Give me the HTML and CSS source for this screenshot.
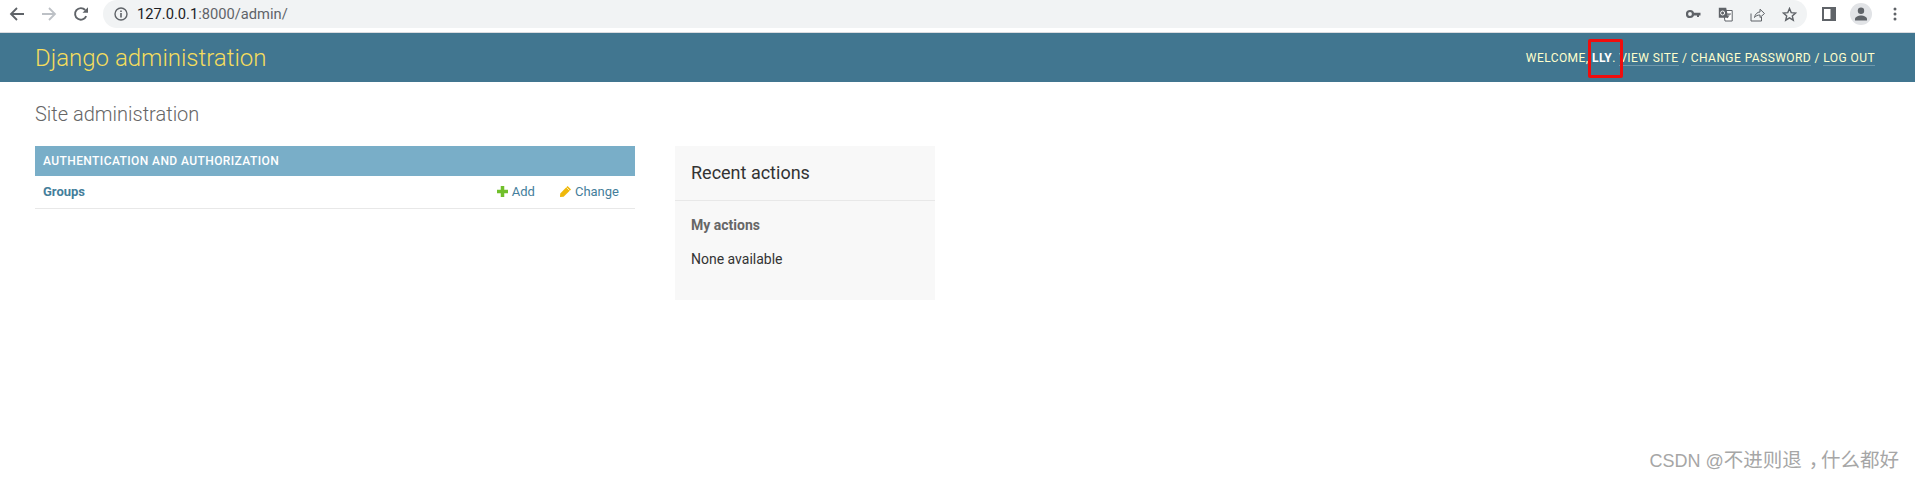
FILE: index.html
```html
<!DOCTYPE html>
<html lang="en">
<head>
    <meta charset="UTF-8">
    <title>Site administration | Django site admin</title>
    <link rel="stylesheet" href="styles.css">
</head>
<body>
    <div class="browser-bar">
        <div class="nav-icons">
            <svg width="16" height="16" viewBox="0 0 16 16"><path d="M15 8H2M8 2L2 8l6 6" fill="none" stroke="#5f6368" stroke-width="1.8"/></svg>
            <svg width="16" height="16" viewBox="0 0 16 16"><path d="M1 8h13M8 2l6 6-6 6" fill="none" stroke="#bdc1c6" stroke-width="1.8"/></svg>
            <svg width="16" height="16" viewBox="0 0 16 16"><path d="M13.2 10.2A5.8 5.8 0 1 1 12.2 4" fill="none" stroke="#5f6368" stroke-width="1.9"/><path d="M9.5 6.8H15V1.3z" fill="#5f6368"/></svg>
        </div>
        <div class="omnibox">
            <svg class="info-icon" width="14" height="14" viewBox="0 0 14 14"><circle cx="7" cy="7" r="6" fill="none" stroke="#5f6368" stroke-width="1.4"/><path d="M6.2 6h1.6v4.4H6.2zM6.2 3.4h1.6V5H6.2z" fill="#5f6368"/></svg>
            <span class="url"><span class="host">127.0.0.1</span>:8000/admin/</span>
            <div class="omni-icons">
                <svg width="15" height="10" viewBox="0 0 15 10"><circle cx="4" cy="5" r="3" fill="none" stroke="#5f6368" stroke-width="2.2"/><path d="M7 3.8h7.5v2.6h-1.5V8h-2V6.4H7z" fill="#5f6368"/></svg>
                <svg width="15" height="15" viewBox="0 0 15 15"><path d="M5 3.5h9.2V14H7z" fill="#fff" stroke="#5f6368"/><path d="M.8.8h7.4l2 10H.8z" fill="#5f6368"/><circle cx="4.6" cy="6" r="2" fill="none" stroke="#fff"/><path d="M9 7h4M11 7c0 2-1 3.5-2 4" fill="none" stroke="#5f6368"/></svg>
                <svg width="15" height="15" viewBox="0 0 15 15"><path d="M1 6.5V14h10.5V10M4.5 10.5C5 7 7.5 5 10 5V2.2l4.5 4.3-4.500 4V8c-2.500 0-4 .8-5.500 2.500z" fill="none" stroke="#5f6368"/></svg>
                <svg width="15" height="15" viewBox="0 0 15 15"><path d="M7.5 1.500l1.700 4.100 4.400.4-3.300 2.900 1 4.300-3.800-2.300-3.800 2.300 1-4.300L1.400 6l4.400-.4z" fill="none" stroke="#5f6368" stroke-width="1.4"/></svg>
            </div>
        </div>
        <div class="toolbar-icons">
            <svg width="14" height="14" viewBox="0 0 14 14"><path d="M0 0h14v14H0z" fill="#5f6368"/><path d="M2 2h6.500v10H2z" fill="#fff"/></svg>
            <div class="avatar">
                <svg width="14" height="14" viewBox="0 0 14 14"><circle cx="7" cy="3.800" r="3.200" fill="#5f6368"/><path d="M1 13.500V12c0-2.300 3.500-3.500 6-3.500s6 1.200 6 3.500v1.500z" fill="#5f6368"/></svg>
            </div>
            <svg class="dots" width="4" height="14" viewBox="0 0 4 14"><circle cx="2" cy="2" r="1.500" fill="#5f6368"/><circle cx="2" cy="7" r="1.500" fill="#5f6368"/><circle cx="2" cy="12" r="1.500" fill="#5f6368"/></svg>
        </div>
    </div>

    <div id="header">
        <h1 class="branding"><a href="#">Django administration</a></h1>
        <div class="user-tools">
            Welcome, <strong>lly</strong>.
            <a href="#">View site</a> /
            <a href="#">Change password</a> /
            <a href="#">Log out</a>
        </div>
        <div class="red-box"></div>
    </div>

    <div class="content">
        <h2 class="page-title">Site administration</h2>
        <div class="columns">
            <div class="module">
                <div class="caption">Authentication and Authorization</div>
                <div class="model-row">
                    <a class="model-name" href="#">Groups</a>
                    <a class="addlink" href="#">
                        <svg width="11" height="11" viewBox="0 0 11 11"><path d="M3.750 0h3.500v3.750H11v3.500H7.250V11h-3.500V7.250H0v-3.500h3.750z" fill="#70bf2b"/></svg>
                        Add
                    </a>
                    <a class="changelink" href="#">
                        <svg width="11" height="11" viewBox="0 0 11 11"><path d="M7.600 0L11 3.400 3.600 10.800 0 11l.2-3.600z" fill="#efb80b"/><path d="M6.500 1.500l3 3" stroke="#fff" stroke-width=".7"/></svg>
                        Change
                    </a>
                </div>
            </div>
            <div class="recent">
                <h2 class="recent-title">Recent actions</h2>
                <h3 class="recent-sub">My actions</h3>
                <p class="recent-none">None available</p>
            </div>
        </div>
    </div>

    <div class="watermark"><span class="watermark-latin">CSDN @</span>不进则退<span class="comma">，</span>什么都好</div>
</body>
</html>
```

FILE: styles.css
```css
html, body {
    height: 100%;
}

body {
    margin: 0;
    font-family: Roboto, 'Liberation Sans', sans-serif;
    background: white;
    color: #333;
    overflow: hidden;
    position: relative;
}

.browser-bar {
    height: 32px;
    border-bottom: 1px solid #dadce0;
    display: flex;
    align-items: flex-start;
    background: white;
}

.nav-icons {
    display: flex;
    gap: 16px;
    padding: 6px 0 0 9px;
    width: 94px;
    flex: none;
}

.omnibox {
    flex: 1;
    height: 28px;
    background: #f1f3f4;
    border-radius: 14px;
    display: flex;
    align-items: center;
    padding-left: 11px;
}

.info-icon {
    flex: none;
}

.url {
    margin-left: 9px;
    font-size: 14.7px;
    color: #5f6368;
}

.host {
    color: #202124;
}

.omni-icons {
    margin-left: auto;
    display: flex;
    align-items: center;
    gap: 17px;
    padding-right: 10px;
}

.toolbar-icons {
    flex: none;
    display: flex;
    align-items: center;
    height: 28px;
    padding: 0 18px 0 15px;
    gap: 14px;
}

.avatar {
    width: 22px;
    height: 22px;
    border-radius: 50%;
    background: #e1e3e6;
    display: flex;
    align-items: center;
    justify-content: center;
}

.dots {
    margin-left: 7px;
}

#header {
    height: 49px;
    background: #417690;
    color: #ffc;
    padding: 0 40px 0 35px;
    display: flex;
    align-items: center;
    justify-content: space-between;
    position: relative;
}

.branding {
    margin: 0;
    font-size: 24px;
    font-weight: 300;
}

.branding a {
    color: #f5dd5d;
    text-decoration: none;
}

.user-tools {
    font-size: 12px;
    letter-spacing: 0.43px;
    text-transform: uppercase;
    font-weight: 400;
}

.user-tools strong {
    color: #fff;
}

.user-tools a {
    color: #ffc;
    text-decoration: none;
    border-bottom: 1px solid rgba(255, 255, 255, 0.25);
}

.red-box {
    position: absolute;
    left: 1588px;
    top: 6px;
    width: 29px;
    height: 33px;
    border: 3px solid #f00d0d;
    border-radius: 2px;
}

.content {
    padding: 20px 35px 0;
}

.page-title {
    margin: 0 0 20px;
    font-size: 20px;
    line-height: 24px;
    font-weight: 300;
    color: #666;
}

.columns {
    display: flex;
    align-items: flex-start;
    gap: 40px;
}

.module {
    width: 600px;
}

.caption {
    height: 30px;
    line-height: 30px;
    padding-left: 8px;
    background: #79aec8;
    color: white;
    font-size: 12px;
    font-weight: 500;
    letter-spacing: 0.41px;
    text-transform: uppercase;
}

.model-row {
    height: 31px;
    padding: 0 16px 1px 8px;
    border-bottom: 1px solid #e8e8e8;
    display: flex;
    align-items: center;
    font-size: 13px;
}

.model-row a {
    color: #447e9b;
    text-decoration: none;
}

.model-name {
    font-weight: 700;
    margin-right: auto;
}

.addlink, .changelink {
    display: flex;
    align-items: center;
    gap: 4px;
}

.changelink {
    margin-left: 25px;
}

.recent {
    width: 260px;
    height: 154px;
    background: #f8f8f8;
}

.recent-title {
    margin: 0;
    height: 54px;
    line-height: 53px;
    padding-left: 16px;
    font-size: 18px;
    font-weight: 400;
    color: #333;
    border-bottom: 1px solid #e8e8e8;
}

.recent-sub {
    margin: 16px 16px 0;
    font-size: 14px;
    line-height: 17px;
    font-weight: 700;
    color: #666;
}

.recent-none {
    margin: 17px 16px 0;
    font-size: 14px;
    line-height: 17px;
    color: #333;
}

.watermark {
    position: absolute;
    right: 16px;
    bottom: 5px;
    font-family: 'Liberation Sans', 'Noto Sans CJK SC', sans-serif;
    font-size: 19.5px;
    color: #a6a6a6;
}

.watermark-latin {
    font-size: 18px;
}

.comma {
    font-feature-settings: "halt";
    padding: 0 2.5px 0 7px;
}
```
